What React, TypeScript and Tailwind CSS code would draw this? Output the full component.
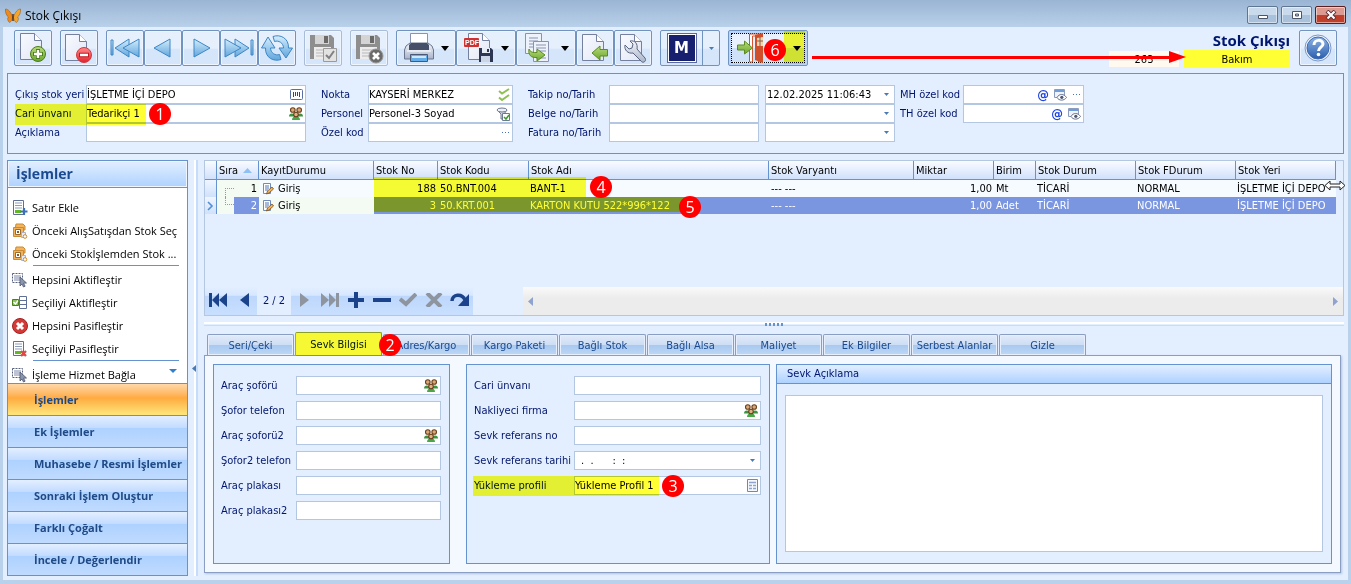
import React, { useState } from "react";

type Kids = { children?: React.ReactNode };

/* ---------- drawings ---------- */

const Svg = ({ w, h, children }: { w: number; h: number } & Kids) => (
  <svg width={w} height={h} viewBox={`0 0 ${w} ${h}`} fill="none" aria-hidden="true" className="shrink-0">
    {children}
  </svg>
);

const Defs = () => (
  <svg width="0" height="0" className="absolute" aria-hidden="true">
    <defs>
      <linearGradient id="page" x1="0" y1="0" x2="1" y2="1">
        <stop offset="0" stopColor="#f8faff" />
        <stop offset="1" stopColor="#e2e7f5" />
      </linearGradient>
      <linearGradient id="blue" x1="0" y1="0" x2="0" y2="1">
        <stop offset="0" stopColor="#d5edfc" />
        <stop offset="1" stopColor="#5fa6dd" />
      </linearGradient>
      <linearGradient id="green" x1="0" y1="0" x2="0" y2="1">
        <stop offset="0" stopColor="#b9dc7c" />
        <stop offset="1" stopColor="#6aa52c" />
      </linearGradient>
      <linearGradient id="red" x1="0" y1="0" x2="0" y2="1">
        <stop offset="0" stopColor="#ff8a8a" />
        <stop offset="1" stopColor="#e3232d" />
      </linearGradient>
      <linearGradient id="steel" x1="0" y1="0" x2="0" y2="1">
        <stop offset="0" stopColor="#f4f7fb" />
        <stop offset="1" stopColor="#a9b4c9" />
      </linearGradient>
      <linearGradient id="help" x1="0" y1="0" x2="0" y2="1">
        <stop offset="0" stopColor="#8fb4e6" />
        <stop offset="1" stopColor="#2a5fae" />
      </linearGradient>
    </defs>
  </svg>
);

const PageShape = ({ x = 0, y = 0 }: { x?: number; y?: number }) => (
  <g transform={`translate(${x} ${y})`}>
    <path d="M.5.5h14l7 7v19H.5z" fill="url(#page)" stroke="#7480a0" />
    <path d="M14.500.5v7h7" fill="#fff" stroke="#7480a0" />
  </g>
);

const NewIcon = () => (
  <Svg w={30} h={32}>
    <PageShape x={2} y={1} />
    <circle cx="20" cy="22" r="7.5" fill="url(#green)" stroke="#4b7d1c" />
    <path d="M20 17v10M15 22h10" stroke="#4b7d1c" strokeWidth="4" />
    <path d="M20 18v8M16 22h8" stroke="#fff" strokeWidth="2.400" />
  </Svg>
);
const DeleteIcon = () => (
  <Svg w={30} h={32}>
    <PageShape x={1} y={2} />
    <circle cx="20" cy="23" r="7.500" fill="url(#red)" stroke="#d13a3f" />
    <path d="M15 23h10" stroke="#c01a22" strokeWidth="4.500" />
    <path d="M16 23h8" stroke="#fff" strokeWidth="2.500" />
  </Svg>
);
const FirstIcon = () => (
  <Svg w={32} h={24}>
    <g fill="url(#blue)" stroke="#3d86c6">
      <path d="M2 4h2v15H2z" />
      <path d="M20 3v18L6 12z" />
      <path d="M30 3v18L14 12z" />
    </g>
  </Svg>
);
const PrevIcon = () => (
  <Svg w={24} h={24}>
    <path d="M19 3v18L3 12z" fill="url(#blue)" stroke="#3d86c6" />
  </Svg>
);
const NextIcon = () => (
  <Svg w={24} h={24}>
    <path d="M5 3v18l16-9z" fill="url(#blue)" stroke="#3d86c6" />
  </Svg>
);
const LastIcon = () => (
  <Svg w={32} h={24}>
    <g fill="url(#blue)" stroke="#3d86c6">
      <path d="M28 4h2v15h-2z" />
      <path d="M12 3v18l14-9z" />
      <path d="M2 3v18l16-9z" />
    </g>
  </Svg>
);
const RefreshIcon = () => (
  <Svg w={34} h={28}>
    <g fill="url(#blue)" stroke="#3d86c6" strokeLinejoin="round">
      <path d="M13 2.500C20 0 29 4 28.500 14h4L26 24l-7-10h4.500c0-5-5-8-9-6.500z" />
      <path d="M21 25.500C14 28 5 24 5.500 14h-4L8 3l7 11h-4.500c0 5 5 8 9 6.500z" />
    </g>
  </Svg>
);
const GreyDisk = ({ cross = false }: { cross?: boolean }) => (
  <Svg w={30} h={32}>
    <path d="M2 3h21l3 3v21H2z" fill="#8e8e8e" />
    <path d="M7 3h14v9H7z" fill="#d4d4d4" />
    <path d="M16 4h4v7h-4z" fill="#6a6a6a" />
    <path d="M6 15h17v12H6z" fill="#ececec" />
    <path d="M8 18h12M8 21h12M8 24h12" stroke="#b9b9b9" />
    {cross ? (
      <>
        <circle cx="22" cy="24" r="7" fill="#6b6b6b" stroke="#999" />
        <path d="M19 21l6 6M25 21l-6 6" stroke="#fff" strokeWidth="2.600" />
      </>
    ) : (
      <>
        <path d="M15.500 16.500h13v13h-13z" fill="#e2e2e2" stroke="#9a9a9a" />
        <path d="M18 23l3 3 5-7" stroke="#808080" strokeWidth="2" />
      </>
    )}
  </Svg>
);
const PrintIcon = () => (
  <Svg w={32} h={32}>
    <path d="M7.500 1.500h17v11h-17z" fill="#fff" stroke="#8793b0" />
    <path d="M3 14l4-3h18l4 3 1.500 4v9H1.500v-9z" fill="url(#steel)" stroke="#6a7590" />
    <path d="M6 13l2-2h16l2 2v5H6z" fill="#454f68" />
    <path d="M4 19h24" stroke="#fff" />
    <path d="M7.500 22.500h17v7h-17z" fill="#63aee9" stroke="#4a5877" />
    <path d="M9 25h14" stroke="#cfe7fa" strokeWidth="2" />
  </Svg>
);
const PdfIcon = () => (
  <Svg w={32} h={32}>
    <PageShape x={5} y={1} />
    <rect x="1" y="6" width="15" height="9" rx="1" fill="#cf3030" />
    <text x="2" y="13" fontSize="7" fontWeight="700" fill="#fff" fontFamily="Liberation Sans, sans-serif">
      PDF
    </text>
    <path d="M16 16h12l2 2v12H16z" fill="#2c3552" />
    <path d="M19 16h8v5h-8z" fill="#e6ebf5" />
    <path d="M24 17h2v3h-2z" fill="#2c3552" />
    <path d="M18 24h9v6h-9z" fill="#cbd5e6" />
  </Svg>
);
const CopyIcon = () => (
  <Svg w={28} h={32}>
    <path d="M2.500 1.500h16v20h-16z" fill="#eef2fa" stroke="#8793b0" />
    <path d="M6 6h9M6 9h9M6 12h9M6 15h9" stroke="#8793b0" />
    <path d="M10.500 9.500h15v20h-15z" fill="#eef2fa" stroke="#8793b0" />
    <path d="M13 13h10M13 16h10M13 19h10M13 26h10" stroke="#8793b0" />
    <path d="M6 17c1 3 4 4 8 3.500V17l8 6-8 6v-3.500C8 26 5 23 6 17z" fill="url(#green)" stroke="#5b8c1d" />
  </Svg>
);
const ImportIcon = () => (
  <Svg w={30} h={32}>
    <PageShape x={2} y={2} />
    <path d="M27.500 17.500h-7.500V14l-8 7 8 7v-4h7.500z" fill="url(#green)" stroke="#5b8c1d" />
  </Svg>
);
const ToolsIcon = () => (
  <Svg w={30} h={32}>
    <PageShape x={2} y={2} />
    <path
      d="M7 13l4 4 3-1 1-4-3-3c5-1 8 3 7 8l8 9c2 3-2 6-4 3l-8-8c-5 1-9-3-8-8z"
      fill="url(#steel)"
      stroke="#59647f"
    />
  </Svg>
);
const DoorIcon = () => (
  <Svg w={32} h={32}>
    <path d="M14.500 2h12v28h-3V4h-6v26h-3z" fill="#fff" stroke="#d4542f" />
    <path d="M20 3l8-2v30l-8-3z" fill="#cf4f2b" />
    <path d="M22 6l6-1v9h-6z" fill="#ead8b5" />
    <path d="M22 9h6M25 5v9" stroke="#8f5a3c" />
    <path d="M2.500 13h7V9l8 7-8 6v-4h-7z" fill="url(#green)" stroke="#5b8c1d" />
  </Svg>
);
const MIcon = () => (
  <span className="flex size-[30px] items-center justify-center border border-[#5a6a9c] bg-white">
    <span className="flex size-[26px] items-center justify-center bg-[#17206e] font-['DejaVu_Sans',sans-serif] text-[15px] font-bold text-white">
      M
    </span>
  </span>
);
const HelpIcon = () => (
  <Svg w={30} h={32}>
    <circle cx="15" cy="16" r="13" fill="#eef4fc" stroke="#7a98c6" />
    <circle cx="15" cy="16" r="11" fill="url(#help)" stroke="#3f6bb0" />
    <path d="M11 13c0-6 9-6 9-1 0 3-4.500 3.500-4.500 7" stroke="#fff" strokeWidth="3" />
    <circle cx="15.500" cy="22.500" r="1.800" fill="#fff" />
  </Svg>
);
const Caret = ({ small = false }: { small?: boolean }) =>
  small ? (
    <Svg w={5} h={3}>
      <path d="M0 0h5L2.500 3z" fill="#4a7ab5" />
    </Svg>
  ) : (
    <Svg w={8} h={5}>
      <path d="M0 0h8L4 5z" fill="#000" />
    </Svg>
  );
const Butterfly = () => (
  <Svg w={16} h={16}>
    <path d="M7.500 9C6 4 3 1 .5 1c-.5 3 1 7 3 8-1.500 1-1 4 1 5.500 2-1 3-3 3-5.500z" fill="#f08a1c" stroke="#8a5010" strokeWidth=".5" />
    <path d="M8.500 9C10 4 13 1 15.500 1c.5 3-1 7-3 8 1.500 1 1 4-1 5.500-2-1-3-3-3-5.500z" fill="#f6a52c" stroke="#8a5010" strokeWidth=".5" />
    <path d="M8 6v7" stroke="#4b2c10" strokeWidth="1.400" />
  </Svg>
);
const People = () => (
  <Svg w={14} h={13}>
    <path d="M0 9.500c0-2 1-3 3-3s3 1 3 3zM8 9.500c0-2 1-3 3-3s3 1 3 3z" fill="#3d9440" />
    <circle cx="3.800" cy="3" r="2.300" fill="#d9a877" stroke="#6b401c" strokeWidth="1.100" />
    <circle cx="10.200" cy="3" r="2.300" fill="#d9a877" stroke="#6b401c" strokeWidth="1.100" />
    <path d="M3 13c0-2.500 1.500-3.500 4-3.500s4 1 4 3.500z" fill="#48a848" />
    <circle cx="7" cy="7.500" r="2.300" fill="#e0b285" stroke="#6b401c" strokeWidth="1.100" />
  </Svg>
);
const Barcode = () => (
  <Svg w={13} h={11}>
    <rect x=".5" y=".5" width="12" height="10" rx="1" fill="#fff" stroke="#5a6ea5" />
    <path d="M3.500 3v5M5.500 3v4M7.500 3v4M9.500 3v5" stroke="#39456e" />
  </Svg>
);
const DoubleCheck = () => (
  <Svg w={12} h={14}>
    <path d="M1 3l3 2.500L11 1M1 9.500L4 12l7-5" stroke="#8dc152" strokeWidth="2" />
  </Svg>
);
const FilterCheck = () => (
  <Svg w={14} h={14}>
    <path d="M1 3l4 4v5h3V7l3-4" fill="#d5dbe6" stroke="#6d7a92" />
    <ellipse cx="6" cy="3" rx="5" ry="2" fill="#eef1f6" stroke="#6d7a92" />
    <path d="M6.500 6.500h7v7h-7z" fill="#fff" stroke="#6d7a92" />
    <path d="M8 10l2 2 3-4" stroke="#3c9a2b" strokeWidth="1.500" />
  </Svg>
);
const Dots = () => (
  <Svg w={9} h={3}>
    <path d="M1 1h1v1H1zM4 1h1v1H4zM7 1h1v1H7z" fill="#4a72b4" />
  </Svg>
);
const EyeSheet = () => (
  <Svg w={13} h={12}>
    <path d="M.5.5h10v8H.5z" fill="#eef3fb" stroke="#8c9cbd" />
    <path d="M1 2h9" stroke="#6f9cdb" strokeWidth="2" />
    <path d="M3 8.500c2-4 7-4 9.500 0-2.500 3.500-7.500 3.500-9.500 0z" fill="#fff" stroke="#68728c" />
    <circle cx="7.800" cy="8.300" r="1.600" fill="#4b5672" />
  </Svg>
);
const At = () => <span className="text-[13px] font-bold leading-none text-[#1f45e0]">@</span>;
const SheetIcon = () => (
  <Svg w={11} h={13}>
    <path d="M.5.5h10v12H.5z" fill="#f5f8fd" stroke="#6f86bb" />
    <path d="M2 3.500h7M2 6.500h3M6 6.500h3M2 9.500h3M6 9.500h3" stroke="#8ea3d0" strokeWidth="1.500" />
  </Svg>
);
const RowAdd = ({ cross = false }: { cross?: boolean }) => (
  <Svg w={16} h={16}>
    <path d="M1.500.5h10v14h-10z" fill="#fff" stroke="#5f6f96" />
    <path d="M3 3h7M3 5.500h7M3 8h7" stroke="#8e9bb8" />
    <path d="M3 10h6v3H3z" fill="#62b822" />
    {cross ? (
      <path d="M9 10l5 5M14 10l-5 5" stroke="#e04848" strokeWidth="2.400" />
    ) : (
      <path d="M12 8v7M8.500 11.500h7" stroke="#3d6fb5" strokeWidth="2.200" />
    )}
  </Svg>
);
const BoxIcon = () => (
  <Svg w={16} h={16}>
    <path d="M4 1h7l2 2v4H3z" fill="#f4b45c" stroke="#c98a35" />
    <path d="M1.500 4.500h10v9h-10z" fill="#f3b15a" stroke="#c98a35" />
    <path d="M3.500 6.500h5v5h-5z" fill="#fff" stroke="#9a6a2e" />
    <path d="M5 9h2" stroke="#8a5a1e" strokeWidth="2" />
    <path d="M9.500 9.500h4v5h-4z" fill="#e7ebf4" stroke="#a9b2c6" />
    <circle cx="13" cy="13.500" r="1.800" fill="#fff" stroke="#d08a2d" />
  </Svg>
);
const SelectAll = () => (
  <Svg w={16} h={16}>
    <path d="M.5 1.500h10v9H.5z" stroke="#55617e" strokeDasharray="2 1" />
    <path d="M2 4h7M2 6h7M2 8h6" stroke="#7c88a6" />
    <path d="M8 5l6.500 6-3 .2 1.600 3-1.600.8-1.500-3L8 14z" fill="#8b95ac" stroke="#4b5672" strokeWidth=".8" />
  </Svg>
);
const SelectOne = () => (
  <Svg w={16} h={15}>
    <path d="M7.500 1.500h7v12h-7zM7.500 5.500h7M7.500 9.500h7" fill="#fff" stroke="#5f6f96" />
    <path d="M.5 4.500h6v6h-6z" fill="#8cc05c" stroke="#4b7d1c" />
    <path d="M1.500 7l2 2 2.500-3.500" stroke="#fff" strokeWidth="1.300" />
  </Svg>
);
const RedCross = () => (
  <Svg w={16} h={16}>
    <circle cx="8" cy="8" r="7.500" fill="#d33a37" stroke="#a32222" />
    <path d="M5 5l6 6M11 5l-6 6" stroke="#fff" strokeWidth="3" />
  </Svg>
);
const EditRow = () => (
  <Svg w={12} h={12}>
    <path d="M1.500.5h7v10h-7z" fill="#fff" stroke="#6f8bbb" />
    <path d="M3 3h4M3 5h4M3 7h3" stroke="#4f74b5" />
    <path d="M4.500 11l1-3L10 4l1.500 2L7 10z" fill="#f2b257" stroke="#7b4f1a" strokeWidth=".8" />
  </Svg>
);

/* ---------- small parts ---------- */

const Badge = ({ n, className }: { n: number; className: string }) => (
  <span
    className={`absolute z-20 flex size-[22px] items-center justify-center rounded-full bg-[#ff0000] font-['Open_Sans',sans-serif] text-[16px] leading-none text-white ${className}`}
  >
    {n}
  </span>
);

const Mark = ({ className }: { className: string }) => (
  <span className={`pointer-events-none absolute z-10 bg-[#ffff33] mix-blend-multiply ${className}`} />
);

const ToolButton = ({
  label,
  drop = false,
  disabled = false,
  children,
}: { label: string; drop?: boolean; disabled?: boolean } & Kids) => (
  <button
    type="button"
    aria-label={label}
    disabled={disabled}
    className={`flex h-9 items-center rounded-[2px] border bg-linear-to-b from-[#e6f0fd] from-50% to-[#d5e5fa] to-55% shadow-[inset_0_0_0_1px_#eef5ff] ${
      drop ? "w-[60px] justify-between pr-1.5 pl-1.5" : "w-[38px] justify-center"
    } ${disabled ? "border-[#a9bdd8]" : "border-[#7193c0]"}`}
  >
    {children}
    {drop && <Caret />}
  </button>
);

type FieldProps = {
  id: string;
  label: string;
  value?: string;
  icons?: React.ReactNode;
  hideLabel?: boolean;
  valuePad?: string;
};

const Box = ({ id, label, value = "", icons, hideLabel, valuePad = "" }: FieldProps) => (
  <div className="relative flex h-[19px] min-w-0 items-center border border-[#b3c7e3] bg-white">
    <input
      id={id}
      defaultValue={value}
      aria-label={hideLabel ? label : undefined}
      className={`h-[17px] w-0 min-w-0 flex-1 bg-transparent text-black outline-none ${valuePad}`}
    />
    {icons && <span className="flex items-center gap-[5px] pr-0.5">{icons}</span>}
  </div>
);

const Field = (p: FieldProps) => (
  <>
    <label htmlFor={p.id} className="whitespace-nowrap">
      {p.label}
    </label>
    <Box {...p} />
  </>
);

const DropArrow = ({ label }: { label: string }) => (
  <button type="button" aria-label={label} className="flex h-4 w-3 items-center justify-center">
    <Caret small />
  </button>
);

/* ---------- sections ---------- */

const TitleBar = () => (
  <header className="flex h-[27px] items-center justify-between bg-linear-to-b from-[#9ab4d3] to-[#b9d1ea] px-[5px]">
    <div className="flex items-center gap-1 pt-1 font-['Open_Sans',sans-serif] text-[12px] text-black">
      <Butterfly />
      <h1>Stok Çıkışı</h1>
    </div>
    <div className="flex gap-[3px] pt-[3px]">
      {["Küçült", "Büyüt", "Kapat"].map((t, i) => (
        <button
          key={t}
          type="button"
          aria-label={t}
          className={`flex h-[18px] w-[31px] items-center justify-center rounded-[2px] border ${
            i === 2
              ? "border-[#5c1d1d] bg-linear-to-b from-[#dd9a90] from-50% to-[#bf3f2b] to-50%"
              : "border-[#5e7693] bg-linear-to-b from-[#c9daec] from-50% to-[#a9c1db] to-50%"
          } shadow-[inset_0_0_0_1px_rgba(255,255,255,0.5)]`}
        >
          <Svg w={12} h={10}>
            {i === 0 && <path d="M1.500 5.500h9v3h-9z" fill="#fff" stroke="#4b5568" />}
            {i === 1 && <path d="M1.500 1.500h9v7h-9zM4.500 4h3v2h-3z" fill="#fff" fillRule="evenodd" stroke="#4b5568" />}
            {i === 2 && (
              <>
                <path d="M2 1l8 8M10 1L2 9" stroke="#5b3038" strokeWidth="4" />
                <path d="M2.500 1.500l7 7M9.500 1.500l-7 7" stroke="#fff" strokeWidth="2.200" />
              </>
            )}
          </Svg>
        </button>
      ))}
    </div>
  </header>
);

const Toolbar = () => (
  <div className="flex items-start gap-2 px-[11px] pt-[3px]">
    <ToolButton label="Yeni"><NewIcon /></ToolButton>
    <ToolButton label="Sil"><DeleteIcon /></ToolButton>
    <div className="flex">
      <ToolButton label="İlk kayıt"><FirstIcon /></ToolButton>
      <ToolButton label="Önceki kayıt"><PrevIcon /></ToolButton>
      <ToolButton label="Sonraki kayıt"><NextIcon /></ToolButton>
      <ToolButton label="Son kayıt"><LastIcon /></ToolButton>
      <ToolButton label="Yenile"><RefreshIcon /></ToolButton>
    </div>
    <ToolButton label="Kaydet" disabled><GreyDisk /></ToolButton>
    <ToolButton label="Vazgeç" disabled><GreyDisk cross /></ToolButton>
    <div className="flex">
      <ToolButton label="Yazdır" drop><PrintIcon /></ToolButton>
      <ToolButton label="PDF kaydet" drop><PdfIcon /></ToolButton>
      <ToolButton label="Kopyala" drop><CopyIcon /></ToolButton>
      <ToolButton label="İçe al"><ImportIcon /></ToolButton>
      <ToolButton label="Ayarlar"><ToolsIcon /></ToolButton>
    </div>
    <div className="flex h-9 w-[60px] rounded-[2px] border border-[#7193c0] bg-linear-to-b from-[#e6f0fd] from-50% to-[#d5e5fa] to-55%">
      <button type="button" aria-label="M" className="flex flex-1 items-center justify-center border-r border-[#7193c0]">
        <MIcon />
      </button>
      <button type="button" aria-label="M seçenekleri" className="flex w-4 items-center justify-center">
        <Caret small />
      </button>
    </div>
    <div className="relative">
      <button
        type="button"
        aria-label="Çıkış"
        className="flex h-9 w-20 items-center rounded-[2px] border border-[#7193c0] bg-[#b9d6f8] p-0.5"
      >
        <span className="flex h-full flex-1 items-center justify-between border border-dotted border-black bg-linear-to-b from-[#e8f1fd] from-50% to-[#cfe1f8] to-50% px-[3px]">
          <DoorIcon />
          <Caret />
        </span>
      </button>
      <Mark className="top-[1px] right-[3px] h-[33px] w-[21px]" />
      <Badge n={6} className="top-[9px] left-9" />
    </div>
    <div className="relative h-9 flex-1">
      <div className="absolute top-[21px] -right-[85px] left-0 z-20 flex h-3 items-center">
        <div className="ml-[-4px] h-[3px] flex-1 bg-[#ff0000]" />
        <Svg w={17} h={12}>
          <path d="M0 0l17 6-17 6z" fill="#ff0000" />
        </Svg>
      </div>
    </div>
    <div className="mr-px flex flex-col items-end">
      <h2 className="font-['Open_Sans',sans-serif] text-[15px] leading-5 font-bold text-[#00156e]">Stok Çıkışı</h2>
      <div className="flex h-[18px] items-center gap-[5px] text-black">
        <span className="flex h-4 w-[70px] items-center justify-center bg-[#fff9f0] pt-0.5">263</span>
        <span className="flex h-[18px] w-[106px] items-center justify-center bg-[#ffff33] pt-0.5">Bakım</span>
      </div>
    </div>
    <ToolButton label="Yardım"><HelpIcon /></ToolButton>
  </div>
);

const HeaderForm = () => (
  <section className="mx-1 mt-[5px] flex h-[81px] items-start border border-[#6593cf] pt-[11px] pl-[7px]">
    <div className="relative grid grid-cols-[71px_220px] items-center">
      <Field id="yer" label="Çıkış stok yeri" value="İŞLETME İÇİ DEPO" icons={<Barcode />} />
      <Field id="cari" label="Cari ünvanı" value="Tedarikçi 1" icons={<People />} />
      <Field id="acik" label="Açıklama" />
      <Mark className="top-[19px] left-0 h-[21px] w-[131px]" />
      <Badge n={1} className="top-[18px] left-[134px]" />
    </div>
    <div className="ml-[15px] grid grid-cols-[47px_145px] items-center">
      <Field id="nokta" label="Nokta" value="KAYSERİ MERKEZ" icons={<DoubleCheck />} />
      <Field id="pers" label="Personel" value="Personel-3 Soyad" icons={<FilterCheck />} />
      <Field id="ozel" label="Özel kod" icons={<Dots />} />
    </div>
    <div className="ml-[15px] grid grid-cols-[81px_150px_130px] items-center">
      <Field id="takip" label="Takip no/Tarih" />
      <div className="ml-1.5 w-[130px]">
        <Box id="takipT" hideLabel label="Takip tarihi" value="12.02.2025 11:06:43" valuePad="pl-px" icons={<DropArrow label="Takvim" />} />
      </div>
      <Field id="belge" label="Belge no/Tarih" />
      <div className="ml-1.5 w-[130px]">
        <Box id="belgeT" hideLabel label="Belge tarihi" icons={<DropArrow label="Takvim" />} />
      </div>
      <Field id="fatura" label="Fatura no/Tarih" />
      <div className="ml-1.5 w-[130px]">
        <Box id="faturaT" hideLabel label="Fatura tarihi" icons={<DropArrow label="Takvim" />} />
      </div>
    </div>
    <div className="ml-[11px] grid grid-cols-[63px_121px] items-center">
      <Field id="mh" label="MH özel kod" icons={<><At /><EyeSheet /><Dots /></>} />
      <Field id="th" label="TH özel kod" icons={<><At /><EyeSheet /></>} />
    </div>
  </section>
);

const actions: { text: string; icon: React.ReactNode; rule?: boolean }[] = [
  { text: "Satır Ekle", icon: <RowAdd /> },
  { text: "Önceki AlışSatışdan Stok Seç", icon: <BoxIcon /> },
  { text: "Önceki Stokİşlemden Stok ...", icon: <BoxIcon />, rule: true },
  { text: "Hepsini Aktifleştir", icon: <SelectAll /> },
  { text: "Seçiliyi Aktifleştir", icon: <SelectOne /> },
  { text: "Hepsini Pasifleştir", icon: <RedCross /> },
  { text: "Seçiliyi Pasifleştir", icon: <RowAdd cross />, rule: true },
  { text: "İşleme Hizmet Bağla", icon: <SelectAll /> },
];
const groups = [
  "İşlemler",
  "Ek İşlemler",
  "Muhasebe / Resmi İşlemler",
  "Sonraki İşlem Oluştur",
  "Farklı Çoğalt",
  "İncele / Değerlendir",
];

const Sidebar = () => (
  <aside className="flex w-[181px] shrink-0 flex-col border border-[#6593cf] bg-white font-['Open_Sans',sans-serif]">
    <h2 className="h-[27px] border-b border-[#6593cf] bg-linear-to-b from-[#e3efff] to-[#aed2ff] pl-2 text-[14px] leading-[26px] font-bold text-[#1b4a8f] shadow-[inset_0_0_0_1px_#f0f6ff]">
      İşlemler
    </h2>
    <ul className="flex flex-1 flex-col pt-2 text-[11px] text-black">
      {actions.map((a) => (
        <li key={a.text} className={a.rule ? "pb-0.5" : "last:-mb-[3px]"}>
          <button type="button" className="flex h-[23px] w-full items-center gap-1 pl-1 whitespace-nowrap">
            <span className="flex w-4 shrink-0 justify-center">{a.icon}</span>
            {a.text}
          </button>
          {a.rule && <div className="mr-2 ml-[25px] h-px bg-[#6593cf]" />}
        </li>
      ))}
    </ul>
    <nav className="relative">
      <button type="button" aria-label="Daha fazla" className="absolute -top-3.5 right-2.5 flex">
        <Svg w={8} h={4}>
          <path d="M0 0h8L4 4z" fill="#2f7fd0" />
        </Svg>
      </button>
      {groups.map((g, i) => (
        <button
          key={g}
          type="button"
          className={`block h-8 w-full border-t border-[#6593cf] pl-[26px] text-left text-[11px] font-bold whitespace-nowrap text-[#1f4a86] ${
            i === 0
              ? "bg-linear-to-b from-[#ffd8a8] via-[#ffab3f] via-45% to-[#fee67a]"
              : "bg-[linear-gradient(#e3efff,#c4dcff_37%,#add1ff_38%,#c0dbff)]"
          }`}
        >
          {g}
        </button>
      ))}
    </nav>
  </aside>
);

const th = "h-[19px] border-r border-b border-[#6593cf] bg-linear-to-b from-[#fafcff] to-[#d0e1fb] px-0.5 pt-px text-left font-normal";

const Grid = () => (
  <div className="relative h-[156px] overflow-hidden border border-[#b3c7e3]">
    <table className="w-[1131px] table-fixed border-separate border-spacing-0 whitespace-nowrap text-black">
      <colgroup>
        <col className="w-3" />
        <col className="w-[42px]" />
        <col className="w-[115px]" />
        <col className="w-16" />
        <col className="w-[91px]" />
        <col className="w-60" />
        <col className="w-[145px]" />
        <col className="w-20" />
        <col className="w-[42px]" />
        <col className="w-[100px]" />
        <col className="w-[100px]" />
        <col className="w-[100px]" />
      </colgroup>
      <thead>
        <tr>
          <th className={th} aria-label="Gösterge" />
          <th className={th}>
            <span className="flex items-center justify-between pr-1">
              Sıra
              <Svg w={9} h={5}>
                <path d="M0 5h9L4.500 0z" fill="#8fc0f5" />
              </Svg>
            </span>
          </th>
          {["KayıtDurumu", "Stok No", "Stok Kodu", "Stok Adı", "Stok Varyantı", "Miktar", "Birim", "Stok Durum", "Stok FDurum", "Stok Yeri"].map(
            (h) => (
              <th key={h} className={th}>
                {h}
              </th>
            ),
          )}
        </tr>
      </thead>
      <tbody>
        {[
          ["1", "188", "50.BNT.004", "BANT-1", "Mt"],
          ["2", "3", "50.KRT.001", "KARTON KUTU 522*996*122", "Adet"],
        ].map(([no, stok, kod, ad, birim]) => {
          const sel = no === "2";
          return (
            <tr key={no} className={sel ? "bg-[#7b96e0] text-white" : "bg-[#f5fbff]"}>
              <td className="h-[17px] border-r border-[#6593cf] bg-linear-to-b from-[#f0f6ff] to-[#d0e1fb] p-0 text-center">
                {sel && (
                  <span className="flex justify-center">
                    <Svg w={7} h={10}>
                      <path d="M1 1l4 4-4 4" stroke="#4f8fd8" strokeWidth="1.600" />
                    </Svg>
                  </span>
                )}
              </td>
              <td className="bg-[#f3fbf3] p-0">
                <span className="flex h-[17px]">
                  <span className={`ml-2 w-[9px] border-l border-dotted border-[#7f9fc4] ${sel ? "h-2 border-b" : "mt-2 border-t"}`} />
                  <span className={`flex flex-1 items-center justify-end pr-0.5 ${sel ? "bg-[#7b96e0]" : ""}`}>{no}</span>
                </span>
              </td>
              <td className={`p-0 pl-[3px] text-black ${sel ? "bg-[#f3fbf3]" : ""}`}>
                <span className="flex items-center gap-1">
                  <EditRow /> Giriş
                </span>
              </td>
              <td className="p-0 pr-0.5 text-right">{stok}</td>
              <td className="p-0 pl-0.5">{kod}</td>
              <td className="p-0 pl-px">{ad}</td>
              <td className="p-0 pl-0.5">--- ---</td>
              <td className="p-0 pr-0.5 text-right">1,00</td>
              <td className="p-0 pl-0.5">{birim}</td>
              <td className="p-0 pl-px">TİCARİ</td>
              <td className="p-0 pl-px">NORMAL</td>
              <td className="p-0 pl-px">İŞLETME İÇİ DEPO</td>
            </tr>
          );
        })}
      </tbody>
    </table>
    <Mark className="top-4 left-[169px] h-5 w-[212px]" />
    <Mark className="top-9 left-[169px] h-[15px] w-[317px]" />
    <Badge n={4} className="top-[15px] left-[385px]" />
    <Badge n={5} className="top-[35px] left-[474px]" />
    <div className="absolute inset-x-0 bottom-0 flex h-7 items-stretch">
      <NavStrip />
      <div className="ml-[50px] flex flex-1 items-center justify-between bg-linear-to-b from-[#fafafa] to-[#ececec] to-40% px-[5px]">
        <button type="button" aria-label="Sola kaydır">
          <Svg w={5} h={9}>
            <path d="M5 0v9L0 4.500z" fill="#8ea3cf" />
          </Svg>
        </button>
        <button type="button" aria-label="Sağa kaydır">
          <Svg w={5} h={9}>
            <path d="M0 0v9l5-4.500z" fill="#8ea3cf" />
          </Svg>
        </button>
      </div>
    </div>
  </div>
);

const strip = "flex items-center bg-[linear-gradient(#e3efff,#d6e7ff_30%,#bcd7fb_32%,#c9dfff)]";
const navIcon = "flex h-7 w-[26px] items-center justify-center pb-0.5";
const NavStrip = () => (
  <div className="flex">
    <div className={`${strip} w-[52px]`}>
      <button type="button" aria-label="İlk" className={navIcon}>
        <Svg w={20} h={14}>
          <path d="M1 0h3v14H1zM11 0v14L4 7zM19 0v14l-8-7z" fill="#1a438c" />
        </Svg>
      </button>
      <button type="button" aria-label="Önceki" className={navIcon}>
        <Svg w={9} h={14}>
          <path d="M9 0v14L0 7z" fill="#1a438c" />
        </Svg>
      </button>
    </div>
    <span className="flex w-[34px] items-center justify-center">2 / 2</span>
    <div className={`${strip} w-[182px]`}>
      <button type="button" aria-label="Sonraki" className={navIcon}>
        <Svg w={9} h={14}>
          <path d="M0 0v14l9-7z" fill="#8f959e" />
        </Svg>
      </button>
      <button type="button" aria-label="Son" className={navIcon}>
        <Svg w={19} h={14}>
          <path d="M15 0h3v14h-3zM8 0v14l7-7zM0 0v14l8-7z" fill="#8f959e" />
        </Svg>
      </button>
      <button type="button" aria-label="Ekle" className={navIcon}>
        <Svg w={16} h={16}>
          <path d="M8 0v16M0 8h16" stroke="#1a438c" strokeWidth="4" />
        </Svg>
      </button>
      <button type="button" aria-label="Çıkar" className={navIcon}>
        <Svg w={18} h={4}>
          <path d="M0 2h18" stroke="#1a438c" strokeWidth="4" />
        </Svg>
      </button>
      <button type="button" aria-label="Onayla" className={navIcon}>
        <Svg w={18} h={14}>
          <path d="M1 6l6 5L17 1" stroke="#8f959e" strokeWidth="4" />
        </Svg>
      </button>
      <button type="button" aria-label="İptal" className={navIcon}>
        <Svg w={18} h={14}>
          <path d="M2 0l14 14M16 0L2 14" stroke="#8f959e" strokeWidth="4" />
        </Svg>
      </button>
      <button type="button" aria-label="Yenile" className={navIcon}>
        <Svg w={20} h={14}>
          <path d="M2 8c0-7 10-8 13-1" stroke="#1a438c" strokeWidth="3.500" />
          <path d="M19 1v12H8z" fill="#1a438c" />
        </Svg>
      </button>
    </div>
  </div>
);

const tabs = ["Seri/Çeki", "Sevk Bilgisi", "Adres/Kargo", "Kargo Paketi", "Bağlı Stok", "Bağlı Alsa", "Maliyet", "Ek Bilgiler", "Serbest Alanlar", "Gizle"];

const Tabs = () => {
  const [active, setActive] = useState(1);
  return (
    <div className="relative mt-1.5 flex items-end gap-px pl-[3px]" role="tablist">
      {tabs.map((t, i) => (
        <button
          key={t}
          type="button"
          role="tab"
          aria-selected={i === active}
          onClick={() => setActive(i)}
          className={`w-[87px] rounded-t-[2px] border border-b-0 border-[#8a9dc3] pt-0.5 text-center whitespace-nowrap ${
            i === active
              ? "h-[23px] bg-[#f5f8ff] text-[#00156e]"
              : "h-[21px] bg-[linear-gradient(#e2ebf8,#cddef5_48%,#a9c8ee_50%,#bcd8f8)] text-[#1b4a8f] shadow-[inset_0_0_0_1px_#e6effb]"
          }`}
        >
          {t}
        </button>
      ))}
      <Mark className="top-0 left-[92px] h-6 w-[86px]" />
      <Badge n={2} className="top-0.5 left-[175px]" />
    </div>
  );
};

const panel = "border border-[#6593cf] bg-[#e3efff]";
const TabPage = () => (
  <div className="mr-[3px] mb-[3px] flex min-h-[216px] flex-1 items-stretch border border-[#8a9dc3] bg-[#f4f8ff] p-2 shadow-[1px_1px_2px_#b3c3dd]">
    <div className={`${panel} w-[237px]`}>
      <div className="grid grid-cols-[75px_145px] items-center gap-y-1.5 pt-[11px] pl-[7px]">
        <Field id="s1" label="Araç şoförü" icons={<People />} />
        <Field id="t1" label="Şofor telefon" />
        <Field id="s2" label="Araç şoforü2" icons={<People />} />
        <Field id="t2" label="Şofor2 telefon" />
        <Field id="p1" label="Araç plakası" />
        <Field id="p2" label="Araç plakası2" />
      </div>
    </div>
    <div className={`${panel} ml-4 w-[304px]`}>
      <div className="relative grid grid-cols-[100px_187px] items-center gap-y-1.5 pt-[11px] pl-[7px]">
        <Field id="c2" label="Cari ünvanı" />
        <Field id="nak" label="Nakliyeci firma" icons={<People />} />
        <Field id="ref" label="Sevk referans no" />
        <Field id="reft" label="Sevk referans tarihi" value=".  .      :  :" valuePad="pl-1.5" icons={<DropArrow label="Takvim" />} />
        <Field id="yuk" label="Yükleme profili" value="Yükleme Profil 1" icons={<SheetIcon />} />
        <Mark className="top-[111px] left-1.5 h-5 w-[186px]" />
        <Badge n={3} className="top-[110px] left-[195px]" />
      </div>
    </div>
    <div className={`${panel} ml-1.5 flex flex-1 flex-col`}>
      <label
        htmlFor="memo"
        className="flex h-[19px] items-center border-b border-[#6593cf] bg-linear-to-b from-[#e3efff] to-[#aed2ff] pl-2.5"
      >
        Sevk Açıklama
      </label>
      <textarea id="memo" className="mx-2 my-[11px] flex-1 resize-none border border-[#b3c7e3] bg-white outline-none" />
    </div>
  </div>
);

export default function App() {
  return (
    <div className="flex min-h-screen flex-col bg-[#b9d1ea] font-['DejaVu_Sans_Condensed','Open_Sans',sans-serif] text-[11px] leading-4 text-[#00156e]">
      <Defs />
      <TitleBar />
      <main className="mx-[3px] mb-1 flex flex-1 flex-col bg-[#e3efff]">
        <Toolbar />
        <HeaderForm />
        <div className="flex flex-1 px-1 pt-1.5 pb-1">
          <Sidebar />
          <div className="mx-[6px] flex w-1 items-center border-r-2 border-l-2 border-l-white border-r-[#c5ddfb]">
            <button type="button" aria-label="Paneli daralt" className="-ml-1">
              <Svg w={4} h={7}>
                <path d="M4 0v7L0 3.500z" fill="#4a7ab5" />
              </Svg>
            </button>
          </div>
          <div className="relative flex min-w-0 flex-1 flex-col">
            <Grid />
            <div className="mt-1.5 flex h-1 items-center justify-center gap-0.5 border-t-2 border-b border-t-white border-b-[#c5ddfb]">
              {[0, 1, 2, 3, 4].map((k) => (
                <span key={k} className="h-[3px] w-0.5 bg-[#6593cf]" />
              ))}
            </div>
            <Tabs />
            <TabPage />
            <div className="absolute top-5 -right-0.5 z-20">
              <Svg w={22} h={11}>
                <path d="M1 5.500L6 1v3h10V1l5 4.500L16 10V7H6v3z" fill="#fff" stroke="#222" />
              </Svg>
            </div>
          </div>
        </div>
      </main>
    </div>
  );
}
